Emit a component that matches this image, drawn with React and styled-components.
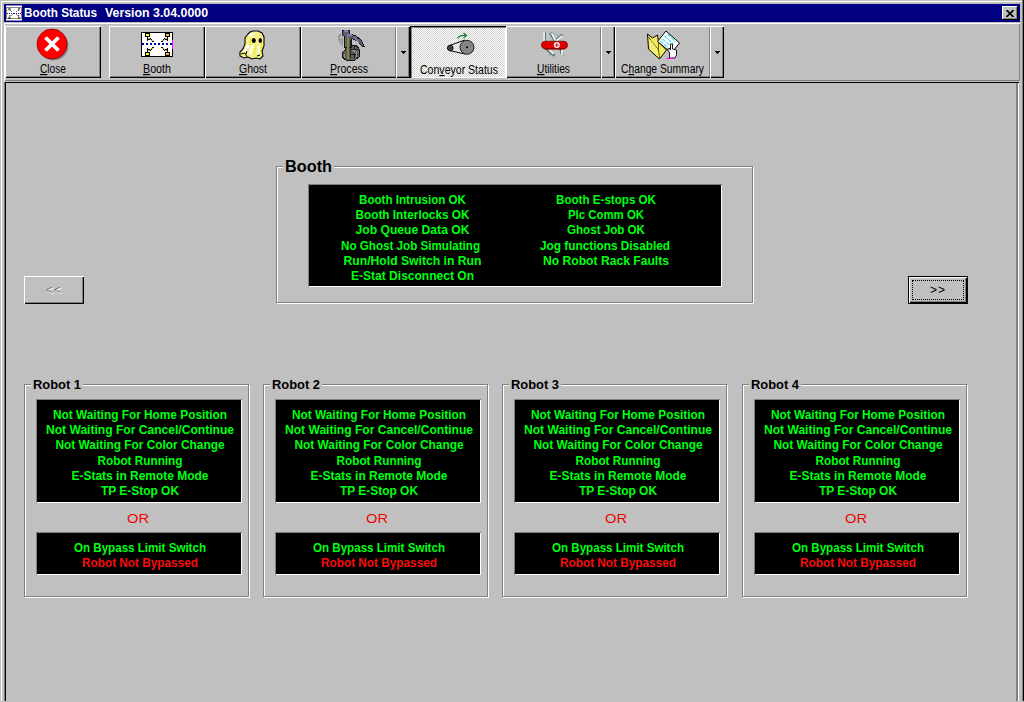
import React from "react";
import styled, { createGlobalStyle, css } from "styled-components";

const Global = createGlobalStyle`
  html, body { margin: 0; padding: 0; background: #c0c0c0; overflow: hidden; }
  * { box-sizing: border-box; }
  button { font: inherit; color: inherit; margin: 0; padding: 0; border: 0; background: #c0c0c0; border-radius: 0; }
`;

const Window = styled.div`
  width: 1024px;
  height: 701px;
  padding: 2px 2px 0 2px;
  background: #c0c0c0;
  box-shadow: inset -1px 0 #000, inset -2px 0 #808080, inset 0 1px #c0c0c0, inset 1px 0 #c0c0c0,
    inset 0 2px #fff, inset 2px 0 #fff;
  font-family: "Liberation Sans", Arial, sans-serif;
  color: #000;
  display: flex;
  flex-direction: column;
`;

const TitleBar = styled.header`
  height: 18px;
  margin: 2px 2px 1px;
  background: #000080;
  color: #fff;
  display: flex;
  align-items: center;
  padding: 0 2px;
  flex: none;
`;

const Title = styled.svg`
  flex: 1;
  height: 18px;
  margin-left: 2px;
  font-family: "Liberation Sans", Arial, sans-serif;
  font-weight: bold;
  font-size: 12px;
`;

const CloseBox = styled.button`
  width: 16px;
  height: 14px;
  display: grid;
  place-items: center;
  box-shadow: inset -1px -1px #000, inset 1px 1px #fff, inset -2px -2px #808080;
`;

const Toolbar = styled.nav`
  height: 58px;
  margin: 0 2px 0 2px;
  flex: none;
  display: flex;
  padding: 3px 0 0 1px;
  box-shadow: inset 0 1px #fff, inset 1px 0 #fff, inset -1px -1px #808080;
`;

const raised = css`
  box-shadow: inset 1px 1px #fff, inset -1px -1px #000, inset -2px -2px #808080;
`;
const raisedSplit = css`
  box-shadow: inset 1px 1px #fff, inset 0 -1px #000, inset -1px -2px #808080;
`;
const sunken = css`
  background: repeating-conic-gradient(#fff 0 25%, #d0d0d0 0 50%) 0 0 / 2px 2px;
  box-shadow: inset 1px 1px #000, inset 2px 2px #808080, inset -1px -1px #fff;
`;

const ToolButton = styled.button`
  width: ${(p) => (p.$split ? 95 : 96)}px;
  height: 52px;
  margin-left: ${(p) => p.$gap || 0}px;
  display: flex;
  flex-direction: column;
  align-items: center;
  padding: ${(p) => (p.$down ? "2px 0 0 2px" : "1px 0 0")};
  ${(p) => (p.$down ? sunken : p.$split ? raisedSplit : raised)}
`;

const DropButton = styled.button`
  width: 14px;
  height: 52px;
  display: grid;
  place-items: center;
  ${raised}
`;

const Icon = styled.svg`
  width: 34px;
  height: 34px;
  margin-bottom: 1px;
  display: block;
  flex: none;
  overflow: visible;
`;

const Caption = styled.svg`
  width: ${(p) => p.$w}px;
  height: 15px;
  display: block;
  flex: none;
  overflow: visible;
  font-family: "Liberation Sans", Arial, sans-serif;
  font-size: 12px;
`;

const Form = styled.main`
  flex: 1;
  margin: 1px 3px 0 2px;
  padding: 0 0 0 20px;
  box-shadow: inset 1px 0 #808080, inset 0 1px #000, inset 2px 0 #000, inset -1px 0 #fff, inset -3px 0 #808080;
`;

const TopRow = styled.div`
  display: flex;
  width: 944px;
  height: 302px;
  padding-top: 84px;
`;

const NavButton = styled.button`
  width: 60px;
  height: 28px;
  margin-top: 110px;
  font-size: 12px;
  letter-spacing: 1px;
  color: ${(p) => (p.$off ? "#808080" : "#000")};
  text-shadow: ${(p) => (p.$off ? "1px 1px #fff" : "none")};
  padding: ${(p) => (p.$off ? 0 : 4)}px;
  box-shadow: ${(p) =>
    p.$off
      ? "inset 1px 1px #fff, inset -1px -1px #000, inset -2px -2px #808080"
      : "inset 0 0 0 1px #000, inset 2px 2px #fff, inset -2px -2px #000, inset -3px -3px #808080"};
`;

const Focus = styled.span`
  display: grid;
  place-items: center;
  height: 20px;
  padding-bottom: 1px;
  border: ${(p) => (p.$on ? "1px dotted #000" : "0")};
`;

const Group = styled.fieldset`
  margin: 0;
  min-width: 0;
  position: relative;
  width: ${(p) => p.$w}px;
  height: ${(p) => p.$h}px;
  padding: ${(p) => p.$pad};
  border: 1px solid #808080;
  box-shadow: 1px 1px #fff, inset 1px 1px #fff;
`;

const BoothGroup = styled(Group)`
  margin: 0 155px 0 192px;
  flex: none;
`;

const Legend = styled.span`
  position: absolute;
  left: 6px;
  top: ${(p) => (p.$big ? -10 : -9)}px;
  height: 18px;
  width: ${(p) => p.$w}px;
  background: #c0c0c0;
`;

const TextLine = styled.svg`
  display: block;
  width: 100%;
  height: ${(p) => p.$h || 15.2}px;
  overflow: visible;
  font-family: "Liberation Sans", Arial, sans-serif;
  font-weight: ${(p) => (p.$plain ? "normal" : "bold")};
  font-size: ${(p) => p.$size || 12}px;
`;

const Screen = styled.div`
  display: flex;
  width: ${(p) => p.$w}px;
  height: ${(p) => p.$h}px;
  padding-top: 8px;
  background: #000;
  box-shadow: inset 1px 1px #808080, inset -1px -1px #fff;
`;

const Column = styled.div`
  width: ${(p) => p.$w}px;
  margin-left: ${(p) => p.$left || 0}px;
`;

const RobotRow = styled.div`
  display: grid;
  grid-template-columns: 239px 239px 240px 225px;
`;

const GREEN = "#00ff10";
const RED = "#f80c0c";

function Fit({ text, w, size, h, fill = GREEN, base = 12, plain, dx = 0, start }) {
  return (
    <TextLine $size={size} $h={h} $plain={plain}>
      <text x={start ? dx : "50%"} dx={start ? 0 : dx} y={base} textAnchor={start ? "start" : "middle"} textLength={w} lengthAdjust="spacingAndGlyphs" fill={fill}>
        {text}
      </text>
    </TextLine>
  );
}

function Label({ text, hot, w }) {
  return (
    <Caption $w={w}>
      <text x="0" y="11" textLength={w} lengthAdjust="spacingAndGlyphs">
        {text.slice(0, hot)}
        <tspan textDecoration="underline">{text[hot]}</tspan>
        {text.slice(hot + 1)}
      </text>
    </Caption>
  );
}

const BoothArt = () => (
  <g shapeRendering="crispEdges">
    <rect x="1.5" y="5.5" width="31" height="24" fill="#fff" stroke="#000" />
    <path d="M2 17H32" stroke="#0000a0" strokeWidth="2" strokeDasharray="2 2" />
    <path d="M32.500 13v9" stroke="#f0f" strokeWidth="1" />
    {[[5, 6], [25, 6], [5, 25], [25, 25]].map(([x, y], i) => (
      <rect key={i} x={x + 0.5} y={y + 0.5} width="4" height="3" fill={x > 9 ? "#ffb040" : "#ffff00"} stroke="#000" />
    ))}
    <path d="M7.500 10v3l3-1 3 3M27.500 10v3l-3-1-3 3M7.500 25v-3l3 1 3-3M27.500 25v-3l-3 1-3-3" fill="none" stroke="#000" />
    <path d="M8.500 11l4 3M26.500 11l-4 3M8.500 24l4-3M26.500 24l-4-3" stroke="#a8a030" />
  </g>
);

const CloseArt = () => (
  <g>
    <circle cx="17.5" cy="18.5" r="15" fill="#808080" />
    <circle cx="16" cy="17" r="15" fill="#f00" stroke="#900000" strokeWidth=".8" />
    <path d="M9.500 10.500l13 13M22.500 10.500l-13 13" stroke="#fff" strokeWidth="3.800" />
  </g>
);

const GhostArt = () => (
  <g>
    <path d="M12 7l2-2 3-1h5l4 2 2 4v9l-2 5 1 5-3 3-4-1-4 1-4-2-4 1-4-2 0-4 3-3 2-5V11z" fill="#f6f28a" stroke="#000" strokeWidth="1.100" />
    <path d="M14 9l4-3M13 18l-5 7M17 18l-3 9M23 19v7" stroke="#fff" strokeWidth="2.600" />
    <path d="M26 17l-2 9M20 18l-2 9M15 11l-1 7" stroke="#f0e000" strokeWidth="1.500" strokeDasharray="2 1" />
    <path d="M5 27l4-1 2 4M11 24l-1 3M21 29l3-1" stroke="#000" fill="none" />
    <ellipse cx="17.8" cy="13.500" rx="2" ry="2.500" />
    <ellipse cx="24.300" cy="13.500" rx="1.700" ry="2.500" />
  </g>
);

const ProcessArt = () => (
  <g shapeRendering="crispEdges">
    <path d="M10 9l-3-2v8l4 4M6 9l5 8M6 12h5M10 7v10" fill="none" stroke="#929292" />
    <path d="M14 18h10l3 4v8l-4 3H14l-4-3v-4l3-3z" fill="#5c5c5c" stroke="#151515" />
    <path d="M11 3h6l1 4 6 2 5 4 3 6-2 0-5-5-6-3v9h-7V9l-2-2z" fill="#60606a" stroke="#151515" />
    <path d="M12 4h4M15 8h5M22 11l5 4" stroke="#8080b8" strokeWidth="1.500" />
    <path d="M15.500 10v22" stroke="#8a8428" strokeWidth="2" />
    <path d="M18.500 13v18M22.500 19v12M18 22h8M18 27h8" stroke="#222" />
    <path d="M20 23h2v3M12 27v4M24 24v6" fill="none" stroke="#999" />
  </g>
);

const ConveyorArt = () => (
  <g>
    <path d="M7.500 17.500L23 12M7.500 22.500L23 26" stroke="#000" strokeWidth="1" />
    <circle cx="8.300" cy="20" r="2.800" fill="#555" stroke="#000" />
    <circle cx="8.300" cy="20" r=".8" />
    <circle cx="25" cy="19.300" r="7" fill="#858585" stroke="#222" />
    <circle cx="25" cy="19.300" r="1" />
    <path d="M15.500 10.500q2-3.500 8.500-3M21.500 5l3 2.500-3 2.500" fill="none" stroke="#208040" strokeWidth="1.200" />
  </g>
);

const KnifeArt = () => (
  <g transform="translate(.5 1.8)">
    <path d="M7 14V3M18 13L13 4M18 12l7-6M9 20l8 7M23 20l2 7" stroke="#607070" strokeWidth="2.800" />
    <path d="M6.500 14V3M18 12L14 4M19 12l6-5M10 19l6 6M24.500 20v7" stroke="#e8f4f4" strokeWidth="1.800" />
    <path d="M14 4l6 2 1 3M11 26h5" stroke="#70a0a0" fill="none" strokeDasharray="2 1" />
    <rect x="4" y="12.500" width="26" height="7.500" rx="3.700" fill="#e00000" stroke="#700" strokeWidth=".8" />
    <path d="M7 20h20" stroke="#900000" strokeWidth="1.400" />
    <circle cx="19.300" cy="16.300" r="3" fill="#fff" />
    <path d="M17.300 16.300h4M19.300 14.300v4" stroke="#d00" />
  </g>
);

const FolderArt = () => (
  <g transform="translate(.5 2)">
    <path d="M1 5l5 4 5-3 1 7 8 8-7 9L2 20z" fill="#f2ec58" stroke="#000" />
    <path d="M2 8l10 13 1 8M12 13v8" fill="none" stroke="#665f00" />
    <path d="M4 11l7 10M4 15l7 10M5 20l6 7" stroke="#fff" strokeDasharray="1 1" />
    <path d="M19.500 2l13.500 12-8 10-14-11.500z" fill="#fff" stroke="#000" />
    <path d="M18 7l9 8M21 5l8 8M16 10l7 6M14 12l7 6" stroke="#50d8e8" strokeWidth="1.200" strokeDasharray="4 1" />
    <path d="M23 29v-5l-2-4 1.500-1 1.500 2v-6h2v5l4 1v5l-1.500 3z" fill="#fff" stroke="#000" strokeWidth=".9" />
    <path d="M20 29.500h8" stroke="#f0f" />
  </g>
);

const Tool = ({ art: Art, ...p }) => (
  <ToolButton $gap={p.gap} $split={p.split} $down={p.down}>
    <Icon viewBox="0 0 34 34"><Art /></Icon>
    <Label text={p.text} hot={p.hot || 0} w={p.w} />
  </ToolButton>
);

const Drop = () => (
  <DropButton>
    <svg width="5" height="3" shapeRendering="crispEdges"><path d="M0 0h5v1H4v1H3v1H2V2H1V1H0z" /></svg>
  </DropButton>
);

const LEFT = [["Booth Intrusion OK", 107], ["Booth Interlocks OK", 114], ["Job Queue Data OK", 114], ["No Ghost Job Simulating", 139, -2], ["Run/Hold Switch in Run", 138], ["E-Stat Disconnect On", 123]];
const RIGHT = [["Booth E-stops OK", 100], ["Plc Comm OK", 76], ["Ghost Job OK", 78], ["Jog functions Disabled", 130, -1], ["No Robot Rack Faults", 126]];
const ROBOT = [["Not Waiting For Home Position", 174], ["Not Waiting For Cancel/Continue", 188], ["Not Waiting For Color Change", 169], ["Robot Running", 85], ["E-Stats in Remote Mode", 137], ["TP E-Stop OK", 78]];

const Lines = ({ items }) => items.map(([t, w, dx]) => <Fit key={t} text={t} w={w} dx={dx} />);

const Robot = ({ n }) => (
  <Group $w={225} $h={213} $pad="14px 0 0 11px">
    <Legend $w={52}><Fit text={`Robot ${n}`} w={48} dx={2} start base={13} fill="#000" /></Legend>
    <Screen $w={206} $h={104}>
      <Column $w={206} $left={2}><Lines items={ROBOT} /></Column>
    </Screen>
    <Column $w={204}><Fit text="OR" w={22} size={13.5} h={29} base={20} fill="#f00000" plain /></Column>
    <Screen $w={206} $h={43}>
      <Column $w={206} $left={2}>
        <Fit text="On Bypass Limit Switch" w={132} />
        <Fit text="Robot Not Bypassed" w={116} fill={RED} />
      </Column>
    </Screen>
  </Group>
);

export default function App() {
  return (
    <Window>
      <Global />
      <TitleBar>
        <svg width="16" height="16" viewBox="0 0 34 34"><rect y="1" width="34" height="32" fill="#fff" /><BoothArt /></svg>
        <Title>
          <text x="0" y="13" fill="#fff" textLength="73" lengthAdjust="spacingAndGlyphs">Booth Status</text>
          <text x="81" y="13" fill="#fff" textLength="103" lengthAdjust="spacingAndGlyphs">Version 3.04.0000</text>
        </Title>
        <CloseBox aria-label="Close">
          <svg width="8" height="7"><path d="M.5 0l7 7M7.500 0l-7 7" stroke="#000" strokeWidth="1.700" /></svg>
        </CloseBox>
      </TitleBar>
      <Toolbar>
        <Tool art={CloseArt} text="Close" w={26} />
        <Tool art={BoothArt} text="Booth" w={28} gap={8} />
        <Tool art={GhostArt} text="Ghost" w={28} />
        <Tool art={ProcessArt} text="Process" w={38} split />
        <Drop />
        <Tool art={ConveyorArt} text="Conveyor Status" hot={3} w={78} down />
        <Tool art={KnifeArt} text="Utilities" w={33} split />
        <Drop />
        <Tool art={FolderArt} text="Change Summary" hot={1} w={83} split />
        <Drop />
      </Toolbar>
      <Form>
        <TopRow>
          <NavButton $off><Focus>&lt;&lt;</Focus></NavButton>
          <BoothGroup $w={477} $h={137} $pad="17px 0 0 31px">
            <Legend $big $w={51}><Fit text="Booth" w={47} size={16} dx={2} start base={15} fill="#000" /></Legend>
            <Screen $w={414} $h={103}>
              <Column $w={207} $left={1}><Lines items={LEFT} /></Column>
              <Column $w={180}><Lines items={RIGHT} /></Column>
            </Screen>
          </BoothGroup>
          <NavButton><Focus $on>&gt;&gt;</Focus></NavButton>
        </TopRow>
        <RobotRow>
          {[1, 2, 3, 4].map((n) => <Robot key={n} n={n} />)}
        </RobotRow>
      </Form>
    </Window>
  );
}
